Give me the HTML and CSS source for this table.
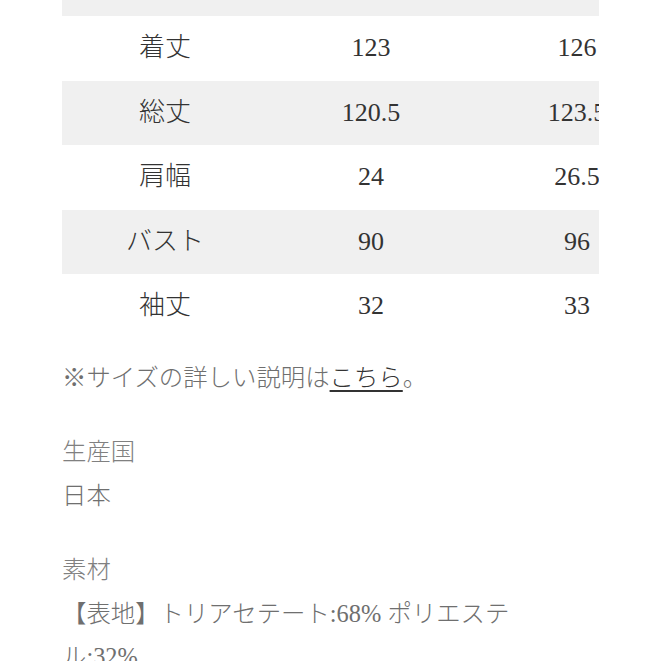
FILE: index.html
```html
<!DOCTYPE html>
<html lang="ja">
<head>
<meta charset="utf-8">
<link rel="stylesheet" href="styles.css">
</head>
<body>
<main class="page">
  <div class="table-wrap">
    <table class="size-table">
      <colgroup><col class="c"><col class="c"><col class="c"></colgroup>
      <tbody>
        <tr class="row partial"><td></td><td></td><td></td></tr>
        <tr class="row"><td>着丈</td><td>123</td><td>126</td></tr>
        <tr class="row"><td>総丈</td><td>120.5</td><td>123.5</td></tr>
        <tr class="row"><td>肩幅</td><td>24</td><td>26.5</td></tr>
        <tr class="row"><td>バスト</td><td>90</td><td>96</td></tr>
        <tr class="row"><td>袖丈</td><td>32</td><td>33</td></tr>
      </tbody>
    </table>
  </div>

  <p class="note">※サイズの詳しい説明は<a class="link" href="#">こちら</a>。</p>

  <dl class="spec">
    <dt class="spec-label">生産国</dt>
    <dd class="spec-value">日本</dd>
    <dt class="spec-label">素材</dt>
    <dd class="spec-value material">【表地】トリアセテート:68% ポリエステル:32%</dd>
  </dl>
</main>
</body>
</html>
```

FILE: styles.css
```css
html, body {
  margin: 0;
  padding: 0;
  background: #fff;
}

.page {
  margin: 0 62px;
  font-family: "Liberation Serif", "Noto Sans CJK JP", serif;
  font-weight: 300;
}

.table-wrap {
  width: 537px;
  overflow: hidden;
}

.size-table {
  border-collapse: collapse;
  table-layout: fixed;
  width: 618px;
  color: #333;
  font-size: 26px;
}

.size-table .c {
  width: 206px;
}

.row td {
  height: 64.5px;
  padding: 0;
  text-align: center;
  vertical-align: middle;
  white-space: nowrap;
  line-height: 1;
}

.row:nth-child(odd) td {
  background: #f0f0f0;
}

.row.partial td {
  height: 16px;
}

.note {
  margin: 17px 0 0;
  font-size: 24.4px;
  line-height: 43.5px;
  color: #6f6f6f;
}

.link {
  color: #333;
  text-decoration: underline;
  text-underline-offset: 4px;
}

.spec {
  margin: 31px 0 0;
  font-size: 24.4px;
  line-height: 43.5px;
  color: #6f6f6f;
  padding-right: 30px;
}

.spec-label {
  color: #808080;
}

.spec-value {
  margin: 0 0 31px;
}
```
